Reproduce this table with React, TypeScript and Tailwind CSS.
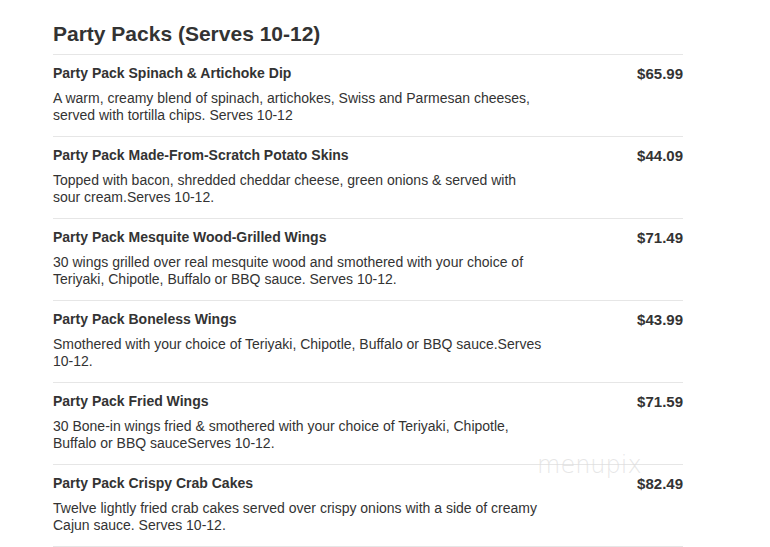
const items = [
  {
    name: "Party Pack Spinach & Artichoke Dip",
    price: "$65.99",
    desc: "A warm, creamy blend of spinach, artichokes, Swiss and Parmesan cheeses, served with tortilla chips. Serves 10-12",
  },
  {
    name: "Party Pack Made-From-Scratch Potato Skins",
    price: "$44.09",
    desc: "Topped with bacon, shredded cheddar cheese, green onions & served with sour cream.Serves 10-12.",
  },
  {
    name: "Party Pack Mesquite Wood-Grilled Wings",
    price: "$71.49",
    desc: "30 wings grilled over real mesquite wood and smothered with your choice of Teriyaki, Chipotle, Buffalo or BBQ sauce. Serves 10-12.",
  },
  {
    name: "Party Pack Boneless Wings",
    price: "$43.99",
    desc: "Smothered with your choice of Teriyaki, Chipotle, Buffalo or BBQ sauce.Serves 10-12.",
  },
  {
    name: "Party Pack Fried Wings",
    price: "$71.59",
    desc: "30 Bone-in wings fried & smothered with your choice of Teriyaki, Chipotle, Buffalo or BBQ sauceServes 10-12.",
  },
  {
    name: "Party Pack Crispy Crab Cakes",
    price: "$82.49",
    desc: "Twelve lightly fried crab cakes served over crispy onions with a side of creamy Cajun sauce. Serves 10-12.",
  },
];

export default function App() {
  return (
    <div className="relative w-[770px] h-[547px] overflow-hidden bg-white font-['Liberation_Sans',Arial,sans-serif] text-[#333]">
      <div className="ml-[53px] w-[630px] pt-[21px]">
        <h1 className="text-[21px] leading-[26px] font-bold pb-[7px] border-b border-[#e6e6e6]">
          Party Packs (Serves 10-12)
        </h1>
        {items.map((item) => (
          <div
            key={item.name}
            className="flex justify-between border-b border-[#e6e6e6] pt-[10px] pb-[12px]"
          >
            <div className="w-[492px]">
              <div className="text-[14px] leading-[17px] font-bold">{item.name}</div>
              <p className="mt-[8px] text-[14px] leading-[17px]">{item.desc}</p>
            </div>
            <div className="text-[15px] leading-[17px] font-bold">{item.price}</div>
          </div>
        ))}
      </div>
      <div className="absolute left-[537px] top-[451px] text-[24px] leading-[28px] text-[#dcdcdc]/70 font-['DejaVu_Sans',sans-serif] font-light">
        menupix
      </div>
    </div>
  );
}
